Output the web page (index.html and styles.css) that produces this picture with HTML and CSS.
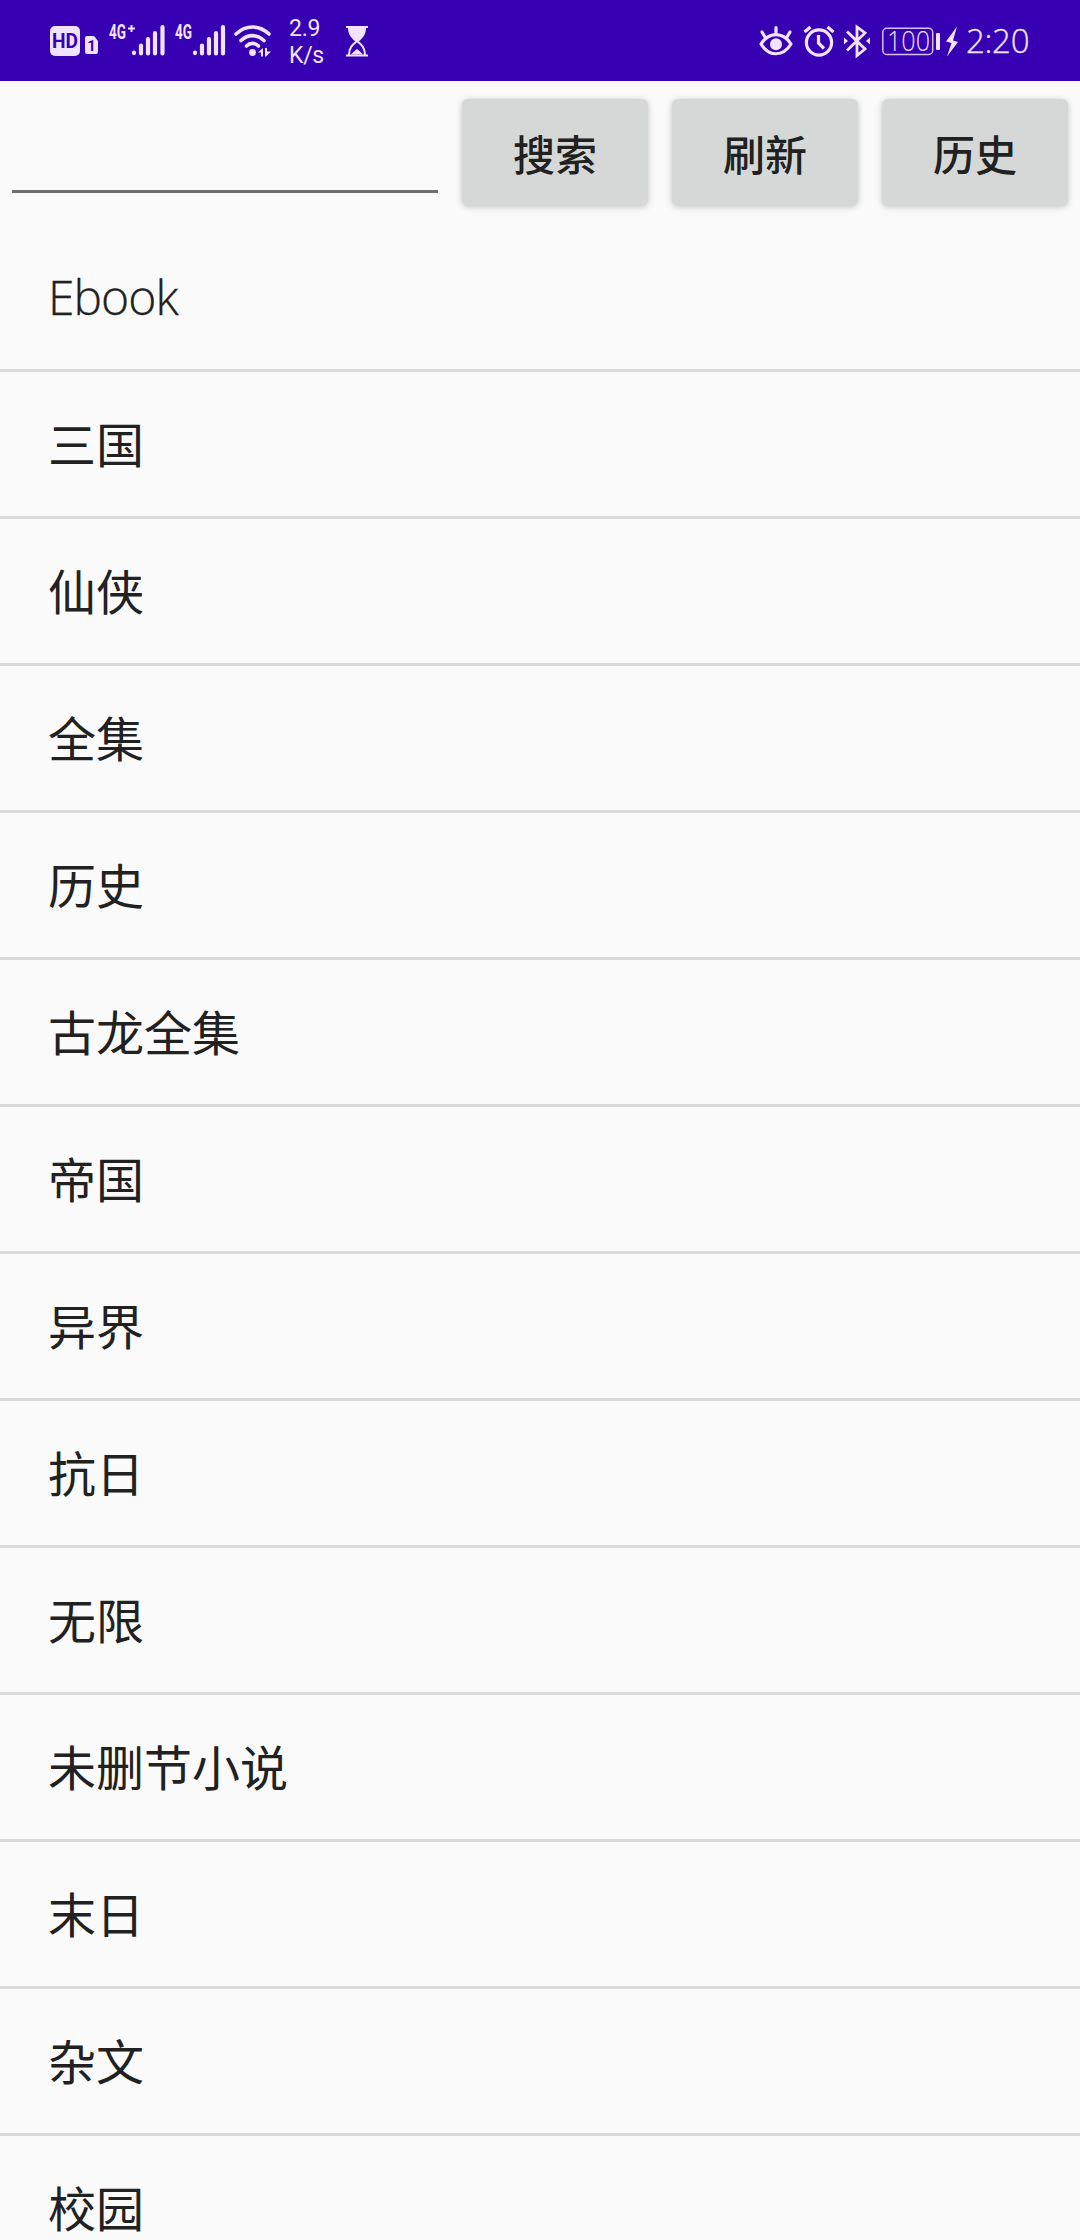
FILE: index.html
```
<!DOCTYPE html>
<html lang="zh-CN">
<head>
    <meta charset="UTF-8">
    <meta name="viewport" content="width=device-width, initial-scale=1.0">
    <title>Ebook</title>
    <link rel="stylesheet" href="styles.css">
</head>
<body>
    <header class="status-bar">
        <div class="status-left">
            <svg class="icon-hd" width="48" height="32" viewBox="0 0 48 32">
                <rect x="0" y="1" width="30" height="30" rx="5" fill="currentColor"/>
                <text class="hd-text" x="15" y="23" text-anchor="middle" textLength="26" lengthAdjust="spacingAndGlyphs">HD</text>
                <path d="M37 11h7l4 5v11a2 2 0 0 1-2 2h-9a2 2 0 0 1-2-2V13a2 2 0 0 1 2-2z" fill="currentColor"/>
                <text class="sim-text" x="41.5" y="26" text-anchor="middle">1</text>
            </svg>
            <svg class="icon-signal" width="56" height="32" viewBox="0 0 56 32">
                <text class="net-text" x="0" y="13.5" textLength="17" lengthAdjust="spacingAndGlyphs">4G</text>
                <path d="M22.5 0v7M19 3.5h7" stroke="currentColor" stroke-width="2"/>
                <path d="M25 27.5v.6M32 20.5v8M39 14v14.5M46 8v20.5M53.5 2v26.5" stroke="currentColor" stroke-width="4.2" stroke-linecap="round"/>
            </svg>
            <svg class="icon-signal" width="50" height="32" viewBox="0 0 50 32">
                <text class="net-text" x="-1" y="13.5" textLength="17" lengthAdjust="spacingAndGlyphs">4G</text>
                <path d="M19 27.5v.6M26 20.5v8M33 14v14.5M40 8v20.5M47 2v26.5" stroke="currentColor" stroke-width="4.2" stroke-linecap="round"/>
            </svg>
            <svg class="icon-wifi" width="38" height="32" viewBox="0 0 38 32">
                <g fill="none" stroke="currentColor" stroke-width="3.6" stroke-linecap="round">
                    <path d="M2 9C12-.3 25-.3 35 9"/>
                    <path d="M7 15.500C14 9 23 9 30 15.500"/>
                    <path d="M12.500 21C16 17.500 21 17.500 24.500 21"/>
                </g>
                <circle cx="18.5" cy="27.5" r="3.4" fill="currentColor"/>
                <path d="M24 27.500l5-4.500v8.500h-2v-4zM31 23h2v3.500h4l-5 5h-1z" fill="currentColor"/>
            </svg>
            <div class="net-speed"><span>2.9</span><span>K/s</span></div>
            <svg class="icon-hourglass" width="24" height="32" viewBox="0 0 24 32">
                <path d="M1 2h22M1 30.500h22" stroke="currentColor" stroke-width="2.2"/>
                <path d="M3 3h18c0 6-3 10-7.500 13.500h-3C6 13 3 9 3 3z" fill="currentColor"/>
                <path d="M4 30c0-7 3-10 8-14c5 4 8 7 8 14" fill="none" stroke="currentColor" stroke-width="2"/>
                <path d="M6 29.500l3-3 3-2.500 3 2.500 3 3z" fill="currentColor"/>
            </svg>
        </div>
        <div class="status-right">
            <svg class="icon-eye" width="34" height="32" viewBox="0 0 34 32">
                <g fill="none" stroke="currentColor" stroke-width="3.2" stroke-linecap="round">
                    <path d="M2 19C10 6.500 24 6.500 32 19C24 32 10 32 2 19z" stroke-linejoin="round"/>
                    <path d="M17 2.500v6M3 7l3 5M31 7l-3 5"/>
                </g>
                <circle cx="17" cy="19.2" r="6" fill="currentColor"/>
            </svg>
            <svg class="icon-alarm" width="32" height="32" viewBox="0 0 32 32">
                <g fill="none" stroke="currentColor" stroke-width="3.2">
                    <circle cx="16" cy="17.5" r="12.6"/>
                    <path d="M15.500 10v8l5.500 5.500"/>
                    <path d="M1.500 7l6-5M30.500 7l-6-5"/>
                </g>
            </svg>
            <svg class="icon-bluetooth" width="26" height="34" viewBox="0 0 26 34">
                <path d="M3 7.500l18 17.500-8 6.500V3l8 6L3 26.500" fill="none" stroke="currentColor" stroke-width="2.8"/>
                <path d="M0 13.500l4 3.500-4 3.500zM26 13.500L22 17l4 3.500z" fill="currentColor"/>
            </svg>
            <svg class="icon-battery" width="76" height="32" viewBox="0 0 76 32">
                <rect x=".8" y="3.3" width="49.9" height="26.2" rx="4" fill="none" stroke="currentColor" stroke-width="1.5" opacity=".85"/>
                <text class="battery-text" x="5" y="25.5" textLength="43" lengthAdjust="spacingAndGlyphs">100</text>
                <rect x="54" y="8" width="4" height="17" rx="1" fill="currentColor"/>
                <path d="M75 1.500L64 16.500l5.500 1.500L65 31.500 76 17l-5-1.500z" fill="currentColor"/>
            </svg>
            <span class="clock">2:20</span>
        </div>
    </header>
    <main>
        <form class="search-bar">
            <input type="text" class="search-input" aria-label="搜索">
            <button type="button">搜索</button>
            <button type="button">刷新</button>
            <button type="button">历史</button>
        </form>
        <ul class="book-list">
            <li class="latin">Ebook</li>
            <li>三国</li>
            <li>仙侠</li>
            <li>全集</li>
            <li>历史</li>
            <li>古龙全集</li>
            <li>帝国</li>
            <li>异界</li>
            <li>抗日</li>
            <li>无限</li>
            <li>未删节小说</li>
            <li>末日</li>
            <li>杂文</li>
            <li>校园</li>
        </ul>
    </main>
</body>
</html>
```
FILE: styles.css
```
* {
    box-sizing: border-box;
}

body {
    margin: 0;
    height: 2240px;
    overflow: hidden;
    background-color: #fafafa;
    color: #212121;
    font-family: "Open Sans", "Noto Sans CJK SC", sans-serif;
}

svg {
    display: block;
    flex: none;
    overflow: visible;
}

/* status bar */
.status-bar {
    display: flex;
    justify-content: space-between;
    height: 81px;
    padding: 0 50px 0 49px;
    background-color: #3700b3;
    color: #f1e2ff;
}

.status-left,
.status-right {
    display: flex;
    align-items: center;
}

.icon-hd {
    margin-left: 1px;
}

.icon-signal {
    margin-left: 11px;
}

.icon-wifi {
    margin-left: 8px;
}

.icon-hourglass {
    margin-left: 22px;
}

.hd-text {
    fill: #3700b3;
    font: bold 20px Roboto, sans-serif;
}

.sim-text {
    fill: #3700b3;
    font: bold 15px Roboto, sans-serif;
}

.net-text {
    fill: currentColor;
    font: bold 20px Roboto, sans-serif;
}

.net-speed {
    display: flex;
    flex-direction: column;
    width: 34px;
    margin-left: 17px;
    padding-top: 2px;
    font: 23px/27px Roboto, sans-serif;
    letter-spacing: -0.3px;
}

.icon-alarm {
    margin-left: 10px;
}

.icon-bluetooth {
    margin-left: 9px;
}

.icon-battery {
    margin-left: 12px;
}

.battery-text {
    fill: currentColor;
    font: 300 27px "Open Sans", sans-serif;
}

.clock {
    width: 65px;
    margin-left: 8px;
    margin-right: -1px;
    font-size: 33px;
    font-weight: 300;
    line-height: 40px;
    letter-spacing: -0.3px;
    -webkit-text-stroke: 0.3px currentColor;
}

/* search */
.search-bar {
    display: flex;
    gap: 24px;
    height: 144px;
    margin: 0;
    padding: 18px 12px;
}

.search-input {
    flex: 1;
    min-width: 0;
    height: 94px;
    padding: 0 12px;
    border: none;
    border-bottom: 3px solid #6f6f6f;
    background: none;
    font-size: 54px;
    outline: none;
}

.search-bar button {
    width: 186px;
    height: 107px;
    padding: 0;
    border: none;
    border-radius: 6px;
    background-color: #d6d8d7;
    box-shadow: 0 1px 6px rgba(0, 0, 0, 0.22);
    color: #212121;
    font: 500 42px/60px "Noto Sans CJK SC", sans-serif;
}

/* list */
.book-list {
    margin: 0;
    padding: 0;
    list-style: none;
}

.book-list li {
    height: 147px;
    padding-left: 48px;
    border-bottom: 3px solid #dadada;
    font-size: 48px;
    line-height: 146px;
}

.book-list .latin {
    font-weight: 300;
    line-height: 144px;
    letter-spacing: -1px;
    -webkit-text-stroke: 0.3px currentColor;
}
```
